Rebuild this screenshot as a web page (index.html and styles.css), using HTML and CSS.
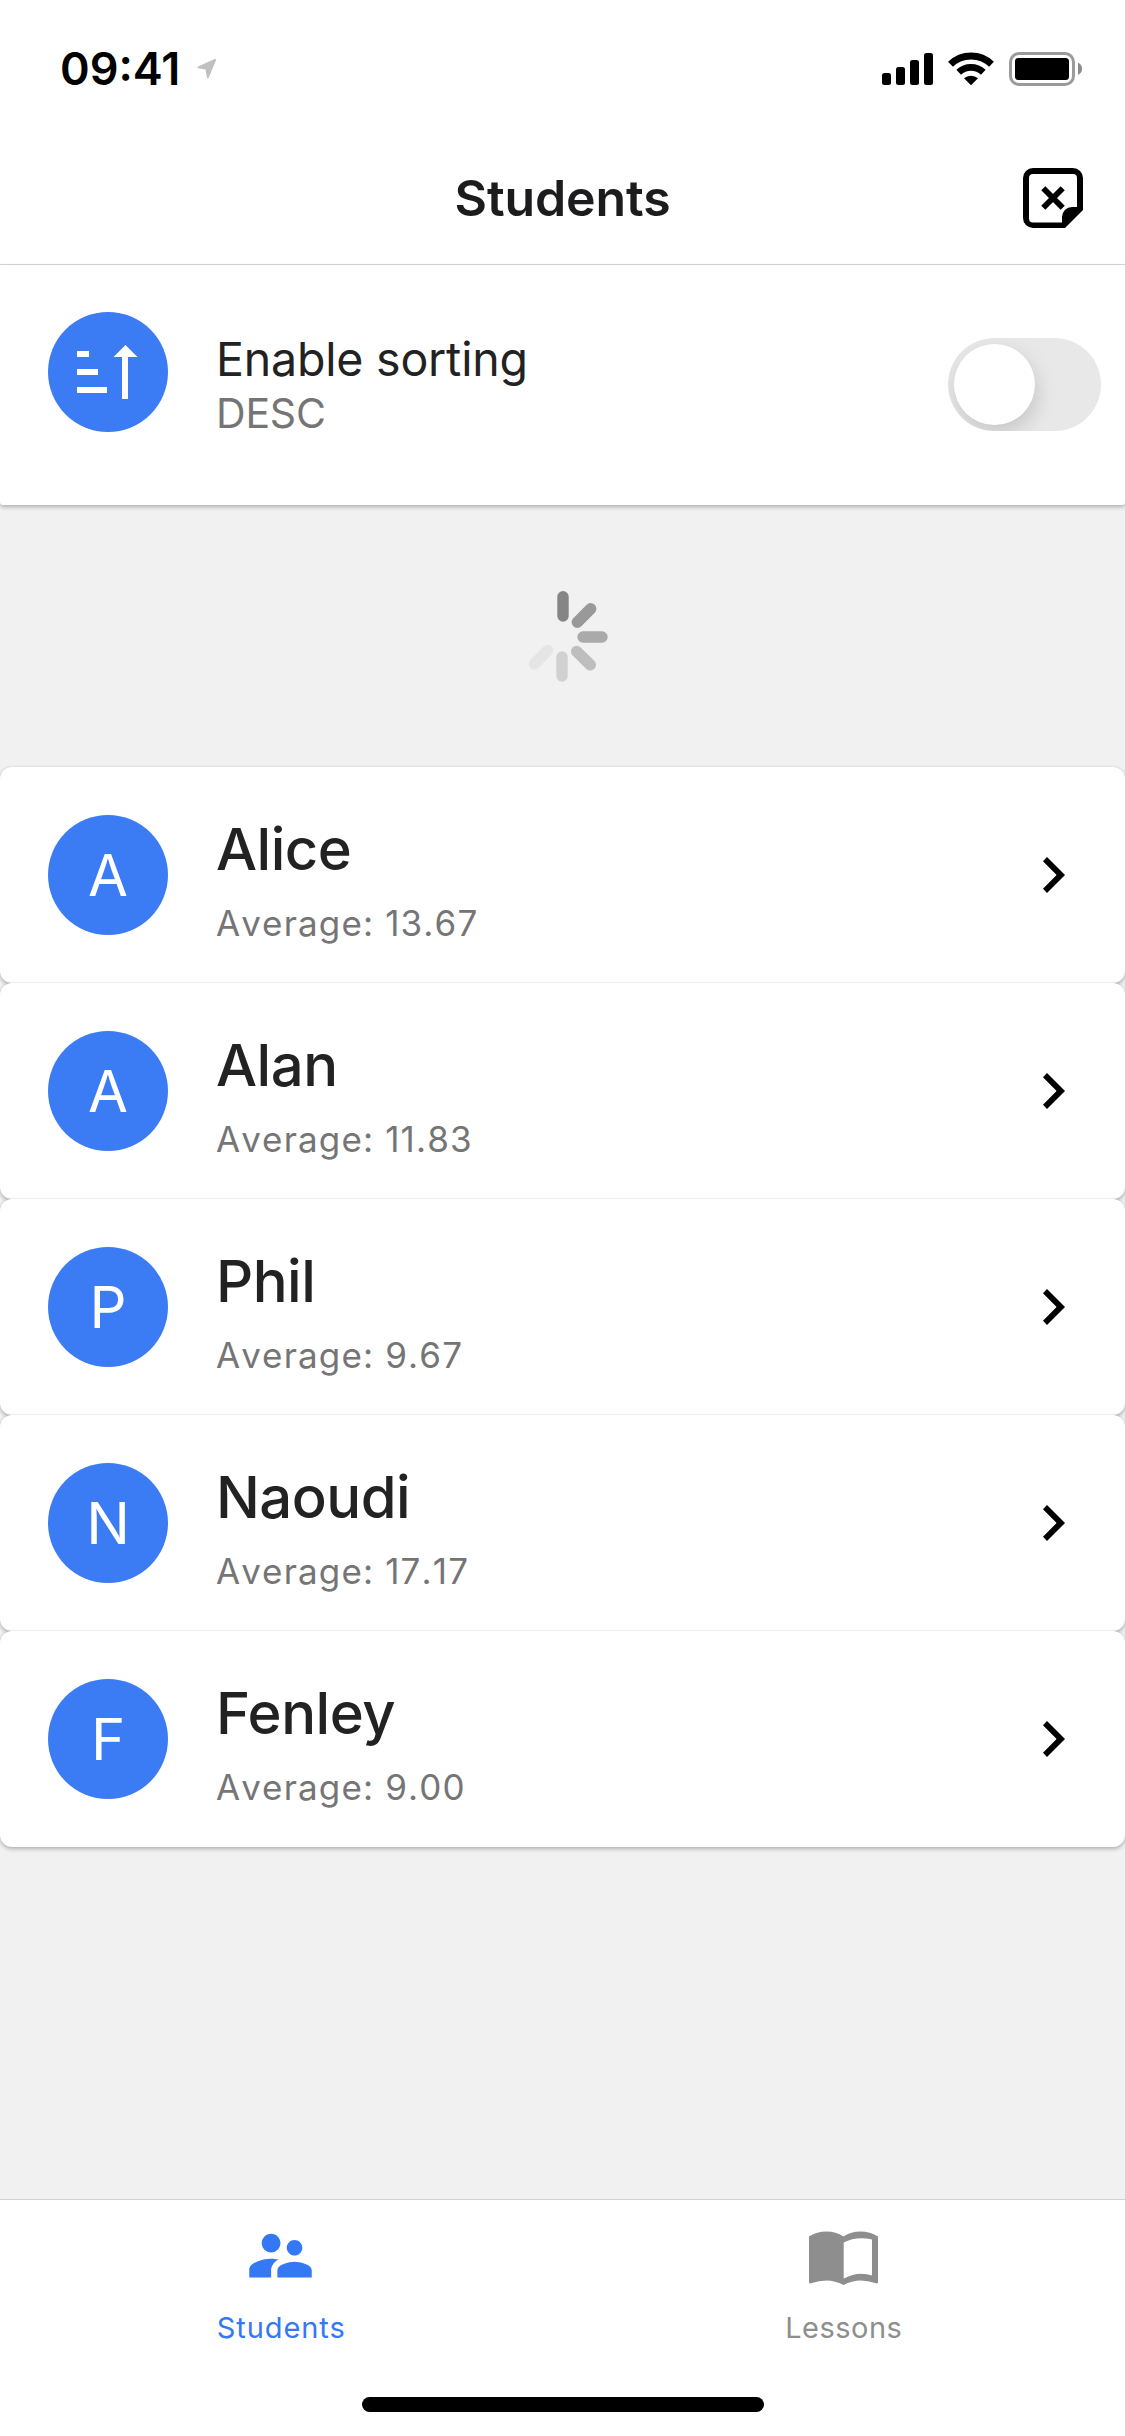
FILE: index.html
```html
<!DOCTYPE html>
<html lang="en">
<head>
<meta charset="utf-8">
<title>Students</title>
<link rel="stylesheet" href="styles.css">
</head>
<body>
<svg class="defs" width="0" height="0" aria-hidden="true">
  <symbol id="chevron" viewBox="0 0 22 36"><path d="M4 0L22 18L4 36L0 31.8L13.6 18L0 4.2Z"/></symbol>
</svg>
<div class="app">
  <div class="status">
    <span class="time">09:41</span>
    <svg class="location" width="20" height="20" viewBox="0 0 20 20"><path d="M18 1L1.5 8.3L9.5 9.8L10.8 18.3Z" fill="#c0c0c0" stroke="#c0c0c0" stroke-width="2" stroke-linejoin="round"/></svg>
    <div class="indicators">
      <svg width="51" height="34" viewBox="0 0 51 34"><rect y="21" width="9" height="12" rx="2.5"/><rect x="14" y="15" width="9" height="18" rx="2.5"/><rect x="28" y="8" width="9" height="25" rx="2.5"/><rect x="42" y="1" width="9" height="32" rx="2.5"/></svg>
      <svg width="46" height="34" viewBox="0 0 46 34"><g fill="none" stroke="#000"><path d="M2.5 12.2A29.5 29.5 0 0 1 43.5 12.2" stroke-width="7"/><path d="M10.7 20.3A18 18 0 0 1 35.3 20.3" stroke-width="6.8"/></g><path d="M16 26.3A10.5 10.5 0 0 1 30 26.3L23 33.2Z"/></svg>
      <svg width="74" height="34" viewBox="0 0 74 34"><rect x="1.5" y="1.5" width="63" height="31" rx="8.5" fill="none" stroke="#9b9b9b" stroke-width="3"/><rect x="6" y="6" width="54" height="22" rx="3.5"/><path d="M69 10.5Q73 12.5 73 16.8T69 23Z" fill="#8c8c8c"/></svg>
    </div>
  </div>
  <header class="header">
    <h1 class="title">Students</h1>
    <svg class="note" width="60" height="60" viewBox="0 0 60 60"><path fill-rule="evenodd" d="M10 0H50A10 10 0 0 1 60 10V42L42 60H10A10 10 0 0 1 0 50V10A10 10 0 0 1 10 0ZM10 6A4 4 0 0 0 6 10V50.500A4 4 0 0 0 10 54.500H39V49A10 10 0 0 1 49 39H54V10A4 4 0 0 0 50 6Z"/><path d="M20.300 20.300L39.700 39.700M39.700 20.300L20.300 39.700" fill="none" stroke="#000" stroke-width="5.800"/></svg>
  </header>
  <section class="sorting">
    <div class="avatar"><svg width="62" height="54" viewBox="0 0 62 54" fill="#fff"><path d="M0 6H12V12H0ZM0 24H21V30H0ZM0 42H30V48H0ZM48.500 0L60.500 12H51V54H45V12H36.500Z"/></svg></div>
    <div class="sort-text"><div class="sort-title">Enable sorting</div><div class="sort-order">DESC</div></div>
    <div class="toggle"><div class="thumb"></div></div>
  </section>
  <div class="loading">
    <svg width="84" height="92" viewBox="524 591 84 92" fill="none" stroke-width="11.400" stroke-linecap="round"><path stroke="#858585" d="M563 596.700V616"/><path stroke="#999" d="M590.700 608.700L577.300 622.300"/><path stroke="#aaa" d="M583 637H602"/><path stroke="#bebebe" d="M576.700 651.500L590.300 664.800"/><path stroke="#d1d1d1" d="M562 657V676"/><path stroke="#e5e5e5" d="M547.700 650.500L534.300 664"/></svg>
  </div>
  <main class="list">
    <article class="student"><div class="avatar">A</div><div class="info"><div class="name">Alice</div><div class="average">Average: 13.67</div></div><svg class="chevron"><use href="#chevron"/></svg></article>
    <article class="student"><div class="avatar">A</div><div class="info"><div class="name">Alan</div><div class="average">Average: 11.83</div></div><svg class="chevron"><use href="#chevron"/></svg></article>
    <article class="student"><div class="avatar">P</div><div class="info"><div class="name">Phil</div><div class="average">Average: 9.67</div></div><svg class="chevron"><use href="#chevron"/></svg></article>
    <article class="student"><div class="avatar">N</div><div class="info"><div class="name">Naoudi</div><div class="average">Average: 17.17</div></div><svg class="chevron"><use href="#chevron"/></svg></article>
    <article class="student"><div class="avatar">F</div><div class="info"><div class="name">Fenley</div><div class="average">Average: 9.00</div></div><svg class="chevron"><use href="#chevron"/></svg></article>
  </main>
  <footer class="bottom">
    <nav class="tabs">
      <div class="tab active"><svg width="75" height="75" viewBox="0 0 24 24" fill="currentColor"><path d="M16.500 12c1.380 0 2.490-1.120 2.490-2.500S17.880 7 16.500 7C15.120 7 14 8.120 14 9.500s1.120 2.500 2.500 2.500zM9 11c1.660 0 2.990-1.340 2.990-3S10.660 5 9 5C7.340 5 6 6.340 6 8s1.340 3 3 3zm7.500 3c-1.830 0-5.500.920-5.500 2.750V19h11v-2.250c0-1.830-3.670-2.750-5.500-2.750zM9 13c-2.330 0-7 1.170-7 3.500V19h7v-2.250c0-.850.330-2.340 2.370-3.470C10.500 13.100 9.660 13 9 13z"/></svg><span>Students</span></div>
      <div class="tab"><svg width="75" height="75" viewBox="-3 -13.500 75 75" fill="currentColor"><path fill-rule="evenodd" d="M0 5Q8 0 17.500 0T34.500 5Q42 0 51.500 0T69 5V51Q68.500 52.300 67 51.800Q59 49 51.500 49Q43 49 34.500 53.500Q26 49 17.500 49Q10 49 2 51.800Q.5 52.300 0 51ZM34.700 11V47Q44 42.300 52 42.300Q58 42.300 63 44V8Q58 6.700 52 6.700Q43 6.700 34.700 11Z"/></svg><span class="lessons">Lessons</span></div>
    </nav>
    <div class="home"></div>
  </footer>
</div>
</body>
</html>
```
FILE: styles.css
```css
* { box-sizing: border-box; }
body { margin: 0; font-family: Inter, "Liberation Sans", sans-serif; color: #222; }
svg { display: block; flex: none; }
.defs { position: absolute; }
.app { width: 1125px; height: 2436px; background: #f1f1f1; display: flex; flex-direction: column; }

.status { height: 132px; flex: none; background: #fff; color: #000; display: flex; align-items: flex-start; padding: 52px 42px 0 60px; }
.time { width: 137px; font-size: 45px; line-height: 34px; font-weight: 600; letter-spacing: 0; }
.location { margin-top: 7px; }
.indicators { margin-left: auto; display: flex; gap: 15px; }

.header { height: 133px; flex: none; background: #fff; border-bottom: 1px solid #d8d8d8; display: grid; grid-template-columns: 60px 1fr 60px; align-items: center; padding: 0 42px; }
.title { grid-column: 2; margin: 0; text-align: center; font-size: 50px; line-height: 60px; font-weight: 600; letter-spacing: -0.1px; color: #1c1c1e; }

.avatar { width: 120px; height: 120px; flex: none; border-radius: 50%; background: #3b7cf5; color: #fff; display: flex; align-items: center; justify-content: center; font-size: 58px; line-height: 120px; }

.sorting { height: 240px; flex: none; background: #fff; display: flex; padding: 47px 24px 0 48px; border-radius: 0 0 3px 3px; box-shadow: 0 2px 4px rgba(0, 0, 0, .28); }
.sort-text { margin: 18px 0 0 48px; flex: 1; }
.sort-title { font-size: 46.500px; line-height: 58px; letter-spacing: -0.200px; }
.sort-order { font-size: 41px; line-height: 50px; letter-spacing: -0.200px; color: #757575; }
.toggle { width: 153px; height: 93px; margin-top: 26px; padding: 6px; border-radius: 47px; background: #e8e8e9; overflow: hidden; }
.thumb { width: 81px; height: 81px; border-radius: 50%; background: #fff; box-shadow: 2px 8px 20px rgba(0, 0, 0, .15); }

.loading { height: 262px; flex: none; display: flex; align-items: center; justify-content: center; padding: 1px 0 0 7px; }

.student { height: 216px; background: #fff; border-radius: 12px; display: flex; align-items: center; padding: 0 60px 0 48px; box-shadow: 0 2px 4px rgba(0, 0, 0, .26), 0 0 3px rgba(0, 0, 0, .08); }
.info { flex: 1; margin-left: 48px; padding-top: 13px; }
.name { font-size: 58px; line-height: 76px; font-weight: 500; letter-spacing: -0.500px; }
.average { margin-top: 6px; font-size: 35px; line-height: 60px; letter-spacing: 1.150px; font-kerning: none; color: #757575; }
.chevron { width: 22px; height: 36px; }

.bottom { margin-top: auto; height: 237px; background: #fff; border-top: 1px solid #d2d2d2; display: flex; flex-direction: column; align-items: center; }
.tabs { width: 100%; height: 197px; display: flex; }
.tab { flex: 1; display: flex; flex-direction: column; align-items: center; padding-top: 18px; color: #8e8e8e; font-size: 29px; line-height: 40px; letter-spacing: 0.900px; }
.tab span { margin-top: 15px; }
.lessons { letter-spacing: 0.500px; }
.active { color: #3478f6; }
.active svg { margin-right: 2px; }
.home { width: 402px; height: 15px; border-radius: 8px; background: #000; }
```
